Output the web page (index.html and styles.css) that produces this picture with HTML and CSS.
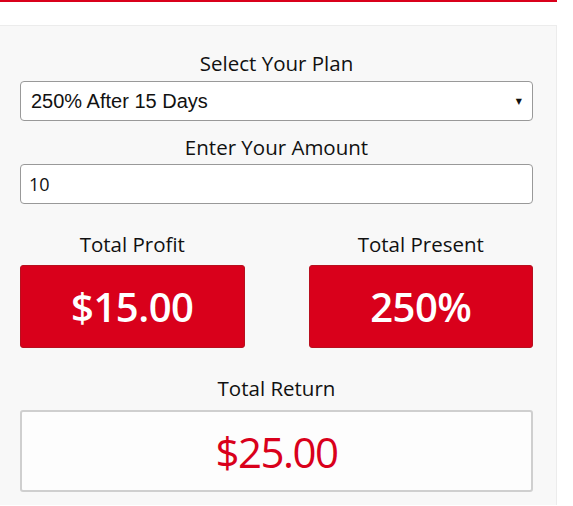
FILE: index.html
```html
<!DOCTYPE html>
<html>
<head>
<meta charset="utf-8">
<link rel="stylesheet" href="styles.css">
</head>
<body>
<div class="page">
  <div class="topbar"></div>
  <div class="panel">
    <div class="field">
      <div class="label">Select Your Plan</div>
      <div class="select">
        <span class="select-text">250% After 15 Days</span>
        <span class="caret">&#9660;</span>
      </div>
    </div>
    <div class="field">
      <div class="label">Enter Your Amount</div>
      <div class="input">10</div>
    </div>
    <div class="stats">
      <div class="stat">
        <div class="label">Total Profit</div>
        <div class="stat-box">$15.00</div>
      </div>
      <div class="stat">
        <div class="label">Total Present</div>
        <div class="stat-box">250%</div>
      </div>
    </div>
    <div class="field total">
      <div class="label">Total Return</div>
      <div class="return-box">$25.00</div>
    </div>
  </div>
</div>
</body>
</html>
```
FILE: styles.css
```css
html, body {
  margin: 0;
  padding: 0;
  background: #fff;
}
.page {
  width: 557px;
  font-family: "Open Sans", "Noto Sans", sans-serif;
  color: #111;
}
.topbar {
  height: 2px;
  background: #d9001b;
  margin-bottom: 23px;
}
.panel {
  background: #f8f8f8;
  border-top: 1px solid #ececec;
  border-right: 1px solid #ececec;
  padding: 25px 23px 20px 20px;
  height: 480px;
  box-sizing: border-box;
}
.label {
  font-size: 20.5px;
  line-height: 24px;
  text-align: center;
  margin-bottom: 6px;
}
.field + .field {
  margin-top: 14px;
}
.field .input {
  margin-top: -1px;
}
.select, .input {
  height: 40px;
  box-sizing: border-box;
  border: 1px solid #999;
  border-radius: 4px;
  background: #fff;
  display: flex;
  align-items: center;
  padding: 0 10px 0 10px;
}
.select-text {
  font-family: "Liberation Sans", Arial, sans-serif;
  font-size: 20px;
  flex: 1;
}
.caret {
  font-family: "DejaVu Sans", sans-serif;
  font-size: 8px;
}
.input {
  font-size: 18px;
  padding-left: 8px;
}
.stats {
  display: flex;
  gap: 64px;
  margin-top: 28px;
}
.stat {
  flex: 1;
}
.stat .label {
  margin-bottom: 9px;
}
.stat-box {
  height: 83px;
  box-sizing: border-box;
  background: #d9001b;
  border: 1px solid #b8101f;
  border-radius: 3px;
  color: #fff;
  font-weight: 600;
  font-size: 40px;
  letter-spacing: -0.5px;
  display: flex;
  align-items: center;
  justify-content: center;
}
.field.total {
  margin-top: 28px;
}
.total .label {
  margin-bottom: 10px;
}
.return-box {
  height: 82px;
  box-sizing: border-box;
  background: #fdfdfd;
  border: 2px solid #cfcfcf;
  border-radius: 3px;
  color: #d9001b;
  font-size: 42px;
  letter-spacing: -1.5px;
  display: flex;
  align-items: center;
  justify-content: center;
}
```
